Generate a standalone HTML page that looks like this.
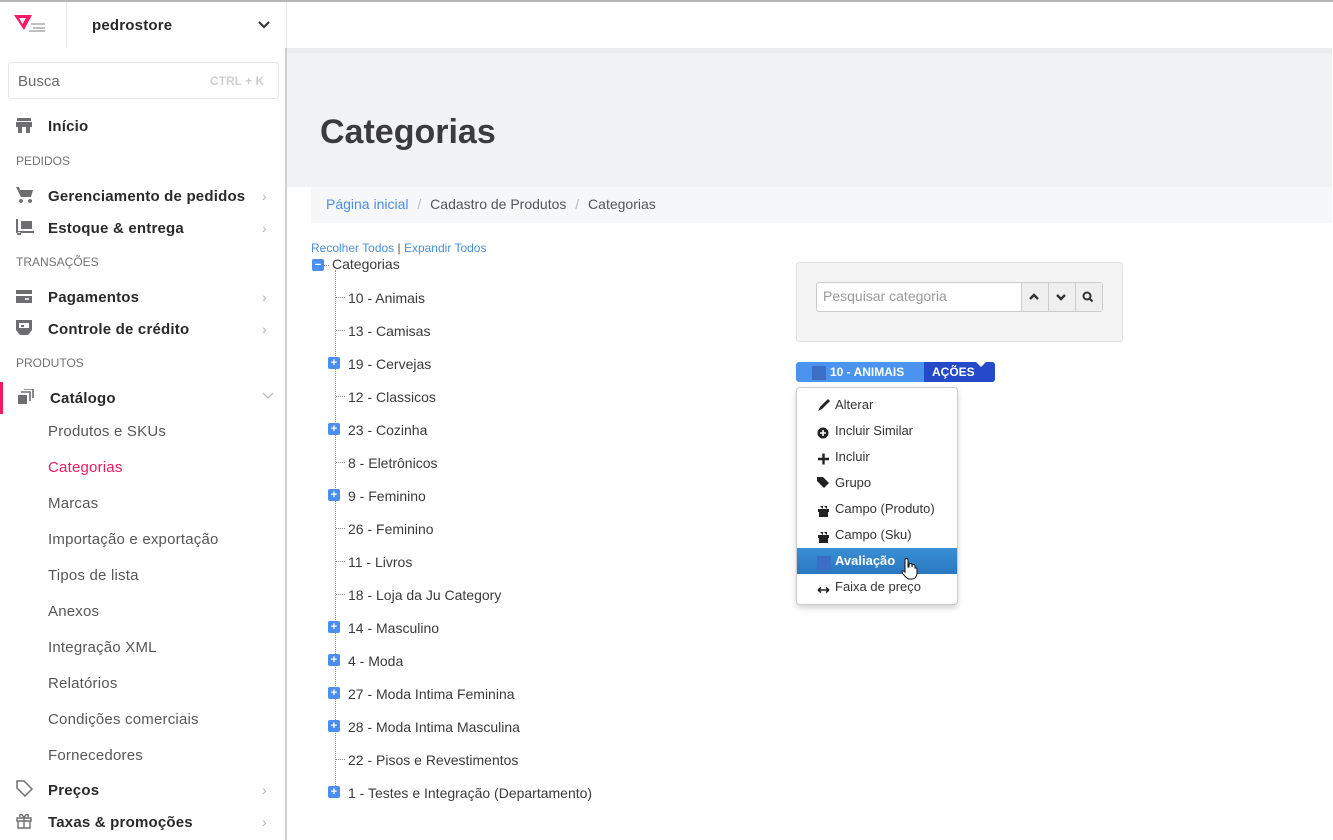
<!DOCTYPE html>
<html><head><meta charset="utf-8"><style>
*{margin:0;padding:0;box-sizing:border-box}
body{width:1333px;height:840px;overflow:hidden;position:relative;background:#fff;font-family:"Liberation Sans","DejaVu Sans",sans-serif;color:#3f3f40}
.a{position:absolute;white-space:nowrap}
.top{left:0;top:0;width:1333px;height:48px;border-top:2px solid #b5b5b5;background:#fff}
.side{left:0;top:48px;width:287px;height:792px;background:#fff;border-right:2px solid #cfcfcf}
.nav{font-size:15px;font-weight:bold;color:#2a2a2b;letter-spacing:.2px}
.sec{font-size:12px;color:#727273}
.sub{font-size:15px;color:#575759;letter-spacing:.2px}
.chev{color:#b0b0b0;font-size:14px}
.ic{fill:#6e6e70}
.tree{font-size:14px;color:#3a3a3a}
.pl{width:12px;height:12px;background:#4a8ef0;border-radius:2px;color:#fff;font-size:11px;font-weight:bold;line-height:12px;text-align:center}
.dh{border-top:1px dotted #888;width:9px;height:0}
.mi{font-size:13px;color:#333;left:835px}
</style></head><body>
<div class="a top"></div>
<div class="a" style="left:66px;top:2px;width:1px;height:46px;background:#e8e8e8"></div>
<div class="a" style="left:286px;top:2px;width:1px;height:46px;background:#e8e8e8"></div>
<svg class="a" style="left:14px;top:14px" width="34" height="18"><path d="M0 1h18l-8 15z" fill="#f71963"/><path d="M5 4h7l-3.5 6z" fill="#fff"/><path d="M17 10h14M19 14h12M15 17h16" stroke="#999" stroke-width="1.3"/></svg>
<div class="a nav" style="left:92px;top:17px;font-size:15px">pedrostore</div>
<svg class="a" style="left:257px;top:20px" width="14" height="10"><path d="M2 2l5 5 5-5" stroke="#333" stroke-width="2" fill="none"/></svg>
<div class="a" style="left:287px;top:48px;width:1046px;height:139px;background:#f1f2f4"></div>
<div class="a" style="left:287px;top:48px;width:1046px;height:5px;background:#ebecee"></div>
<div class="a" style="left:1332px;top:48px;width:1px;height:792px;background:#fff"></div>
<div class="a" style="left:320px;top:113px;font-size:34px;font-weight:bold;color:#3b3b3c">Categorias</div>
<div class="a" style="left:311px;top:187px;width:1021px;height:36px;background:#f6f7f9"></div>
<div class="a" style="left:326px;top:196px;font-size:14px;color:#555"><span style="color:#4c8ce8">Página inicial</span> <span style="color:#bbb;margin:0 5px">/</span> Cadastro de Produtos <span style="color:#bbb;margin:0 5px">/</span> Categorias</div>
<div class="a side"></div>
<div class="a" style="left:8px;top:62px;width:271px;height:37px;border:1px solid #e6e6e6;border-radius:3px"></div>
<div class="a" style="left:18px;top:73px;font-size:15px;color:#6a6a6a">Busca</div>
<div class="a" style="left:210px;top:74px;font-size:12px;font-weight:bold;color:#cfcfcf">CTRL + K</div>
<svg class="a" style="left:16px;top:118px" width="16" height="16"><path class="ic" d="M1 0h14v3H1zM0 4h16v5H0zM2 9h4v6H2zM10 9h4v6h-4z"/></svg>
<div class="a nav" style="left:48px;top:118px">Início</div>
<div class="a sec" style="left:16px;top:154px">PEDIDOS</div>
<svg class="a" style="left:16px;top:187px" width="18" height="16"><path class="ic" d="M0 0h3l1 3h13l-2 7H5zM5 12a2 2 0 1 0 .1 0zM14 12a2 2 0 1 0 .1 0z"/></svg>
<div class="a nav" style="left:48px;top:188px">Gerenciamento de pedidos</div><div class="a chev" style="left:262px;top:188px">›</div>
<svg class="a" style="left:16px;top:219px" width="18" height="16"><path class="ic" d="M0 0h2v12h16v2H0zM5 2h11v8H5zM3 13a2 2 0 1 0 .1 0z"/></svg>
<div class="a nav" style="left:48px;top:220px">Estoque &amp; entrega</div><div class="a chev" style="left:262px;top:220px">›</div>
<div class="a sec" style="left:16px;top:255px">TRANSAÇÕES</div>
<svg class="a" style="left:16px;top:290px" width="16" height="13"><path class="ic" d="M0 0h16v4H0zM0 6h16v7H0z"/><path d="M9 9h4" stroke="#fff" stroke-width="1.5"/></svg>
<div class="a nav" style="left:48px;top:289px">Pagamentos</div><div class="a chev" style="left:262px;top:289px">›</div>
<svg class="a" style="left:16px;top:320px" width="16" height="16"><path class="ic" d="M0 0h16v10l-4 5H4L0 10z"/><path d="M3 3h10v5H3z" fill="#fff"/><path class="ic" d="M5 5h3v2H5z"/></svg>
<div class="a nav" style="left:48px;top:321px">Controle de crédito</div><div class="a chev" style="left:262px;top:321px">›</div>
<div class="a sec" style="left:16px;top:356px">PRODUTOS</div>
<div class="a" style="left:0;top:382px;width:3px;height:32px;background:#f71963"></div>
<svg class="a" style="left:18px;top:389px" width="16" height="16"><path class="ic" d="M0 6h9v9H0z"/><path d="M3 3h9v9M6 0h9v9" stroke="#6e6e70" stroke-width="1.6" fill="none"/></svg>
<div class="a nav" style="left:50px;top:390px">Catálogo</div>
<svg class="a" style="left:262px;top:392px" width="12" height="8"><path d="M1 1l5 5 5-5" stroke="#bbb" stroke-width="1.3" fill="none"/></svg>
<div class="a sub" style="left:48px;top:423px">Produtos e SKUs</div>
<div class="a sub" style="left:48px;top:459px;color:#f0195f">Categorias</div>
<div class="a sub" style="left:48px;top:495px">Marcas</div>
<div class="a sub" style="left:48px;top:531px">Importação e exportação</div>
<div class="a sub" style="left:48px;top:567px">Tipos de lista</div>
<div class="a sub" style="left:48px;top:603px">Anexos</div>
<div class="a sub" style="left:48px;top:639px">Integração XML</div>
<div class="a sub" style="left:48px;top:675px">Relatórios</div>
<div class="a sub" style="left:48px;top:711px">Condições comerciais</div>
<div class="a sub" style="left:48px;top:747px">Fornecedores</div>
<svg class="a" style="left:16px;top:780px" width="17" height="17"><path d="M1 1h7l8 8-7 7-8-8z" stroke="#6e6e70" stroke-width="1.5" fill="none"/></svg>
<div class="a nav" style="left:48px;top:782px">Preços</div><div class="a chev" style="left:262px;top:782px">›</div>
<svg class="a" style="left:16px;top:812px" width="16" height="17"><path d="M1 6h14v3H1zM2 9h12v7H2zM8 6v10M8 6C6 1 3 2 4 5M8 6c2-5 5-4 4-1" stroke="#6e6e70" stroke-width="1.4" fill="none"/></svg>
<div class="a nav" style="left:48px;top:814px">Taxas &amp; promoções</div><div class="a chev" style="left:262px;top:814px">›</div>

<div class="a" style="left:311px;top:241px;font-size:12px;color:#4a8fd8">Recolher Todos <span style="color:#555">|</span> Expandir Todos</div>
<div class="a" style="left:335px;top:270px;height:522px;border-left:1px dotted #888"></div>
<div class="a pl" style="left:312px;top:259px">−</div>
<div class="a dh" style="left:324px;top:265px;width:5px"></div>
<div class="a tree" style="left:332px;top:256px">Categorias</div>

<div class="a" style="left:796px;top:262px;width:327px;height:80px;background:#f4f4f4;border:1px solid #e0e0e0;border-radius:3px"></div>
<div class="a" style="left:816px;top:282px;width:287px;height:30px;border:1px solid #ccc;border-radius:3px;background:#fff"></div>
<div class="a" style="left:823px;top:288px;font-size:14px;color:#999">Pesquisar categoria</div>
<div class="a" style="left:1021px;top:283px;width:81px;height:28px;background:#efefef;border-left:1px solid #ccc"></div>
<div class="a" style="left:1048px;top:283px;width:1px;height:28px;background:#ccc"></div>
<div class="a" style="left:1075px;top:283px;width:1px;height:28px;background:#ccc"></div>
<svg class="a" style="left:1028px;top:290px" width="70" height="14"><path d="M2 9l4-4 4 4M29 5l4 4 4-4" stroke="#333" stroke-width="2.4" fill="none"/><circle cx="59" cy="6" r="3.5" stroke="#333" stroke-width="2" fill="none"/><path d="M61.5 8.5l3 3" stroke="#333" stroke-width="2.2"/></svg>
<div class="a" style="left:796px;top:362px;width:128px;height:20px;background:#4a94ef;border-radius:3px 0 0 3px"></div>
<div class="a" style="left:924px;top:362px;width:71px;height:20px;background:#2449c9;border-radius:0 3px 3px 0"></div>
<div class="a" style="left:812px;top:366px;width:14px;height:14px;background:#3b6fc6"></div>
<div class="a" style="left:830px;top:365px;font-size:12px;font-weight:bold;color:#fff">10 - ANIMAIS</div>
<div class="a" style="left:932px;top:365px;font-size:12px;font-weight:bold;color:#fff">AÇÕES</div>
<div class="a" style="left:976px;top:362px;width:0;height:0;border-left:5px solid transparent;border-right:5px solid transparent;border-top:5px solid #fff"></div>
<div class="a" style="left:796px;top:387px;width:162px;height:218px;background:#fff;border:1px solid #ccc;border-radius:4px;box-shadow:0 3px 6px rgba(0,0,0,.18)"></div>
<div class="a" style="left:797px;top:548px;width:160px;height:26px;background:linear-gradient(#3a8fd4,#2a77bf)"></div>
<svg class="a" style="left:817px;top:396px" width="16" height="200"><path d="M1 15l2-4 8-8 2 2-8 8z" fill="#222"/><circle cx="6" cy="37" r="5.5" fill="#222"/><path d="M3 37h6M6 34v6" stroke="#fff" stroke-width="1.6"/><path d="M1 63h11M6.5 57.5v11" stroke="#222" stroke-width="2.4"/><path d="M0 81h6l6 6-5 5-7-7z" fill="#222"/><path d="M1 113h11v3H1zM2 116h9v5H2zM3 110h3v3M7 110h3v3" fill="#222"/><path d="M1 139h11v3H1zM2 142h9v5H2zM3 136h3v3M7 136h3v3" fill="#222"/><rect x="0" y="160" width="14" height="14" fill="#3b6fc6"/><path d="M1 194h11M1 194l3-2.5M1 194l3 2.5M12 194l-3-2.5M12 194l-3 2.5" stroke="#222" stroke-width="1.5" fill="none"/></svg>
<div class="a mi" style="top:397px">Alterar</div>
<div class="a mi" style="top:423px">Incluir Similar</div>
<div class="a mi" style="top:449px">Incluir</div>
<div class="a mi" style="top:475px">Grupo</div>
<div class="a mi" style="top:501px">Campo (Produto)</div>
<div class="a mi" style="top:527px">Campo (Sku)</div>
<div class="a mi" style="top:553px;color:#fff;font-weight:bold">Avaliação</div>
<div class="a mi" style="top:579px">Faixa de preço</div>
<svg class="a" style="left:900px;top:557px" width="18" height="24"><path d="M5 14V3a1.5 1.5 0 0 1 3 0v7h1V8a1.5 1.5 0 0 1 3 0v2h0V9a1.5 1.5 0 0 1 3 0v2a1.5 1.5 0 0 1 2 1v4c0 3-2 6-5 6H9c-2 0-4-3-6-5l-1-2c0-1 1-2 3 0z" fill="#fff" stroke="#111" stroke-width="1"/></svg>
<div class="a dh" style="left:336px;top:297px"></div><div class="a tree" style="left:348px;top:290px">10 - Animais</div>
<div class="a dh" style="left:336px;top:330px"></div><div class="a tree" style="left:348px;top:323px">13 - Camisas</div>
<div class="a pl" style="left:328px;top:357px">+</div><div class="a tree" style="left:348px;top:356px">19 - Cervejas</div>
<div class="a dh" style="left:336px;top:396px"></div><div class="a tree" style="left:348px;top:389px">12 - Classicos</div>
<div class="a pl" style="left:328px;top:423px">+</div><div class="a tree" style="left:348px;top:422px">23 - Cozinha</div>
<div class="a dh" style="left:336px;top:462px"></div><div class="a tree" style="left:348px;top:455px">8 - Eletrônicos</div>
<div class="a pl" style="left:328px;top:489px">+</div><div class="a tree" style="left:348px;top:488px">9 - Feminino</div>
<div class="a dh" style="left:336px;top:528px"></div><div class="a tree" style="left:348px;top:521px">26 - Feminino</div>
<div class="a dh" style="left:336px;top:561px"></div><div class="a tree" style="left:348px;top:554px">11 - Livros</div>
<div class="a dh" style="left:336px;top:594px"></div><div class="a tree" style="left:348px;top:587px">18 - Loja da Ju Category</div>
<div class="a pl" style="left:328px;top:621px">+</div><div class="a tree" style="left:348px;top:620px">14 - Masculino</div>
<div class="a pl" style="left:328px;top:654px">+</div><div class="a tree" style="left:348px;top:653px">4 - Moda</div>
<div class="a pl" style="left:328px;top:687px">+</div><div class="a tree" style="left:348px;top:686px">27 - Moda Intima Feminina</div>
<div class="a pl" style="left:328px;top:720px">+</div><div class="a tree" style="left:348px;top:719px">28 - Moda Intima Masculina</div>
<div class="a dh" style="left:336px;top:759px"></div><div class="a tree" style="left:348px;top:752px">22 - Pisos e Revestimentos</div>
<div class="a pl" style="left:328px;top:786px">+</div><div class="a tree" style="left:348px;top:785px">1 - Testes e Integração (Departamento)</div>
</body></html>
